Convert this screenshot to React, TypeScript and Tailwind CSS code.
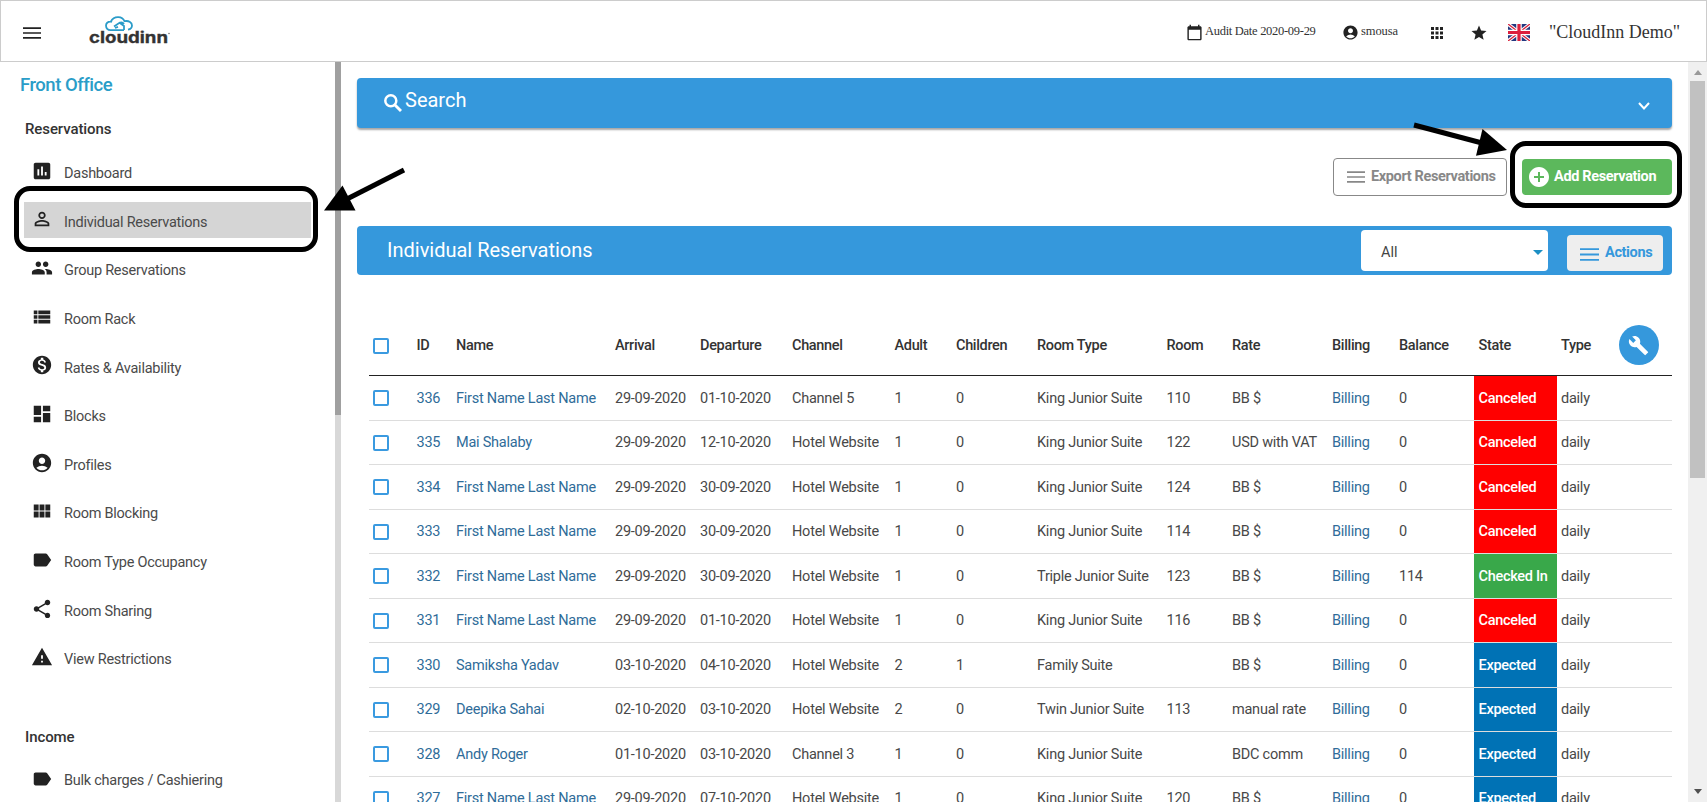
import type { ReactNode } from 'react';
import { clsx } from 'clsx';
import {
  MdAccountCircle,
  MdApps,
  MdAssessment,
  MdCalendarToday,
  MdDashboard,
  MdLabel,
  MdMonetizationOn,
  MdPeople,
  MdPermIdentity,
  MdBuild,
  MdShare,
  MdStar,
  MdViewList,
  MdViewModule,
  MdWarning,
  MdAddCircle,
} from 'react-icons/md';

const menu = [
  { icon: MdAssessment, label: 'Dashboard' },
  { icon: MdPermIdentity, label: 'Individual Reservations', active: true },
  { icon: MdPeople, label: 'Group Reservations' },
  { icon: MdViewList, label: 'Room Rack' },
  { icon: MdMonetizationOn, label: 'Rates & Availability' },
  { icon: MdDashboard, label: 'Blocks' },
  { icon: MdAccountCircle, label: 'Profiles' },
  { icon: MdViewModule, label: 'Room Blocking' },
  { icon: MdLabel, label: 'Room Type Occupancy' },
  { icon: MdShare, label: 'Room Sharing' },
  { icon: MdWarning, label: 'View Restrictions' },
];

const rows = [
  { id: 336, name: 'First Name Last Name', arrival: '29-09-2020', departure: '01-10-2020', channel: 'Channel 5', adult: 1, children: 0, roomType: 'King Junior Suite', room: '110', rate: 'BB $', balance: 0, state: 'Canceled' },
  { id: 335, name: 'Mai Shalaby', arrival: '29-09-2020', departure: '12-10-2020', channel: 'Hotel Website', adult: 1, children: 0, roomType: 'King Junior Suite', room: '122', rate: 'USD with VAT', balance: 0, state: 'Canceled' },
  { id: 334, name: 'First Name Last Name', arrival: '29-09-2020', departure: '30-09-2020', channel: 'Hotel Website', adult: 1, children: 0, roomType: 'King Junior Suite', room: '124', rate: 'BB $', balance: 0, state: 'Canceled' },
  { id: 333, name: 'First Name Last Name', arrival: '29-09-2020', departure: '30-09-2020', channel: 'Hotel Website', adult: 1, children: 0, roomType: 'King Junior Suite', room: '114', rate: 'BB $', balance: 0, state: 'Canceled' },
  { id: 332, name: 'First Name Last Name', arrival: '29-09-2020', departure: '30-09-2020', channel: 'Hotel Website', adult: 1, children: 0, roomType: 'Triple Junior Suite', room: '123', rate: 'BB $', balance: 114, state: 'Checked In' },
  { id: 331, name: 'First Name Last Name', arrival: '29-09-2020', departure: '01-10-2020', channel: 'Hotel Website', adult: 1, children: 0, roomType: 'King Junior Suite', room: '116', rate: 'BB $', balance: 0, state: 'Canceled' },
  { id: 330, name: 'Samiksha Yadav', arrival: '03-10-2020', departure: '04-10-2020', channel: 'Hotel Website', adult: 2, children: 1, roomType: 'Family Suite', room: '', rate: 'BB $', balance: 0, state: 'Expected' },
  { id: 329, name: 'Deepika Sahai', arrival: '02-10-2020', departure: '03-10-2020', channel: 'Hotel Website', adult: 2, children: 0, roomType: 'Twin Junior Suite', room: '113', rate: 'manual rate', balance: 0, state: 'Expected' },
  { id: 328, name: 'Andy Roger', arrival: '01-10-2020', departure: '03-10-2020', channel: 'Channel 3', adult: 1, children: 0, roomType: 'King Junior Suite', room: '', rate: 'BDC comm', balance: 0, state: 'Expected' },
  { id: 327, name: 'First Name Last Name', arrival: '29-09-2020', departure: '07-10-2020', channel: 'Hotel Website', adult: 1, children: 0, roomType: 'King Junior Suite', room: '120', rate: 'BB $', balance: 0, state: 'Expected' },
];

const headings = ['ID', 'Name', 'Arrival', 'Departure', 'Channel', 'Adult', 'Children', 'Room Type', 'Room', 'Rate', 'Billing', 'Balance'];

const stateColors: Record<string, string> = {
  Canceled: 'bg-[#ff0000]',
  'Checked In': 'bg-[#39a84a]',
  Expected: 'bg-[#0072b5]',
};

const columns =
  'grid grid-cols-[47.5px_39.5px_159px_85px_92px_102.5px_61.5px_81px_129.5px_65.5px_100px_67px_75px_83px_61.5px_1fr]';

function Lines({ className }: { className?: string }) {
  return (
    <svg viewBox="0 0 18 13" preserveAspectRatio="none" className={className} stroke="currentColor" strokeWidth="1.8">
      <path d="M0 1.2h18M0 6.5h18M0 11.8h18" />
    </svg>
  );
}

function Logo() {
  return (
    <div className="relative h-[30px] w-[84px]">
      <svg viewBox="0 0 28 16" className="absolute top-0 left-[16px] h-[16px] w-[28px]" fill="none" stroke="#2b9cc9" strokeWidth="1.8">
        <path d="M19 14.2H5.5C2.7 14.2 1 12 1 9.6 1 7.3 2.8 5.6 5.4 5.6 5.8 5.6 6.4 5.7 7 6M5.8 5.6C7.5 2.2 10.5 1 13.3 1.1c3 .1 5.2 1.7 6.2 4.1 4.6-.8 7.5 1.3 7.5 4.3 0 2.2-1.5 3.7-4 4.200" />
        <path d="M9 10.500l5.500-3.700 4.500 3.200v4M10 12l3-1.200M14.500 6.800c2-.6 3.500-.2 4.500 1.200" />
      </svg>
      <svg viewBox="0 0 84 30" className="absolute inset-0 h-[30px] w-[84px]">
        <text x="0" y="27" textLength="79" lengthAdjust="spacingAndGlyphs" fontFamily="Inter, sans-serif" fontWeight="700" fontSize="15.5" fill="#333" stroke="#333" strokeWidth="0.3">
          cloudinn
        </text>
        <circle cx="80" cy="17.5" r="0.8" fill="#777" />
      </svg>
    </div>
  );
}

function Flag() {
  return (
    <svg viewBox="0 0 22 17" className="h-[17px] w-[22px]">
      <path fill="#23377f" d="M0 0h22v17H0z" />
      <path stroke="#fff" strokeWidth="3.4" d="M0 0l22 17M22 0L0 17" />
      <path stroke="#d8223b" strokeWidth="1.3" d="M0 0l22 17M22 0L0 17" />
      <path stroke="#fff" strokeWidth="5.5" d="M11 0v17M0 8.5h22" />
      <path stroke="#dc1f3d" strokeWidth="3.2" d="M11 0v17M0 8.5h22" />
    </svg>
  );
}

function Checkbox() {
  return <span className="block h-4 w-4 rounded-[2px] border-2 border-[#3a9ae0] bg-white" />;
}

function Cell({ children, className }: { children?: ReactNode; className?: string }) {
  return <div className={clsx('flex items-center', className)}>{children}</div>;
}

function Header() {
  return (
    <header className="flex h-[62px] shrink-0 items-center border border-[#ccc] bg-white pl-[22px] text-[#222]">
      <Lines className="mt-[3px] h-[12px] w-[18px]" />
      <div className="ml-[48px] -mt-px">
        <Logo />
      </div>
      <div className="ml-auto flex items-center font-['Liberation_Serif',serif] text-[12.5px] text-[#333]">
        <MdCalendarToday className="mr-[2px] mt-[2px] h-[17px] w-[17px] text-[#222]" />
        <span className="w-[137px] tracking-[-0.29px]">Audit Date 2020-09-29</span>
        <MdAccountCircle className="mr-[2px] mt-[3px] h-[17px] w-[17px] text-[#222]" />
        <span className="w-[67px] tracking-[-0.1px]">smousa</span>
        <MdApps className="mr-[24px] mt-1 h-[18px] w-[18px] text-[#222]" />
        <MdStar className="mr-[20px] mt-[3px] h-[18px] w-[18px] text-[#222]" />
        <div className="mr-[19px] mt-[3px]">
          <Flag />
        </div>
        <span className="mt-[2px] w-[157px] text-[18px]">&quot;CloudInn Demo&quot;</span>
      </div>
    </header>
  );
}

function Sidebar() {
  return (
    <aside className="relative flex w-[341px] shrink-0 overflow-visible">
      <div className="flex-1 pl-5">
        <h2 className="mt-[10px] text-[18.5px] leading-[26px] font-medium tracking-[-0.48px] text-[#2a9dc8]">Front Office</h2>
        <h3 className="mt-[21px] ml-[5px] text-[15px] leading-5 font-medium tracking-[-0.1px] text-[#333]">Reservations</h3>
        <ul className="mt-2 mr-6">
          {menu.map((item) => (
            <li key={item.label} className="flex h-[48.65px] items-center">
              <a
                className={clsx(
                  'ml-1 flex h-9 flex-1 items-center text-[14.5px] tracking-[-0.25px] text-[#4a4a4a]',
                  item.active && 'bg-[#d5d5d5]',
                )}
              >
                <item.icon className="-mt-px ml-[7px] mr-[11px] h-[22px] w-[22px] text-[#222]" />
                <span className="pt-[5px]">{item.label}</span>
              </a>
            </li>
          ))}
        </ul>
        <h3 className="mt-[45px] ml-[5px] text-[15px] leading-5 font-medium tracking-[-0.1px] text-[#333]">Income</h3>
        <div className="mt-4 ml-[11px] flex h-9 items-center text-[14.5px] tracking-[-0.25px] text-[#4a4a4a]">
          <MdLabel className="-mt-1 mr-[11px] h-[22px] w-[22px] text-[#222]" />
          Bulk charges / Cashiering
        </div>
      </div>
      <div className="w-[6px] bg-[#d8d8d8]">
        <div className="h-[353px] bg-[#a0a0a0]" />
      </div>

      {/* Callout on the active item */}
      <div className="absolute top-[123.5px] left-[14px] h-[66px] w-[304px] rounded-[16px] border-[5px] border-black" />
      <svg className="absolute top-[100px] left-[320px] h-[60px] w-[90px]" viewBox="320 162 90 60">
        <path d="M404 170L346 199.5" stroke="#000" strokeWidth="5" />
        <path d="M324 210.5L342.5 185.5 355.5 210.5z" />
      </svg>
    </aside>
  );
}

function Toolbar() {
  return (
    <div className="relative mt-[30px] flex h-[38px] items-center justify-end gap-[15px] text-[14.5px] font-bold tracking-[-0.36px]">
      <button className="flex h-[38px] w-[174px] items-center rounded-[4px] border border-[#888] pl-[13px] text-[#888]">
        <Lines className="mr-[6px] h-3 w-[18px] shrink-0" />
        <span className="whitespace-nowrap">Export Reservations</span>
      </button>
      <button className="flex h-9 w-[150px] items-center rounded-[4px] bg-[#5cb85c] pl-[5px] text-white">
        <MdAddCircle className="mr-[3px] h-6 w-6" />
        Add Reservation
      </button>

      {/* Callout on the add button */}
      <div className="absolute -top-[17px] -right-[10px] h-[67px] w-[172px] rounded-[16px] border-[5px] border-black" />
      <svg className="absolute -top-[38px] right-[162px] h-[50px] w-[100px]" viewBox="1410 120 100 50">
        <path d="M1414 125L1482 143" stroke="#000" strokeWidth="5" />
        <path d="M1507 150L1482.5 129 1476 155.7z" />
      </svg>
    </div>
  );
}

function ReservationsTable() {
  return (
    <div className="mt-[41px] ml-3 text-[14.5px] tracking-[-0.24px] text-[#484848]">
      <div className={clsx(columns, 'h-[60px] border-b border-[#222] font-medium tracking-[-0.33px] text-[#333]')}>
        <Cell className="pl-[3.5px]">
          <Checkbox />
        </Cell>
        {headings.map((heading) => (
          <Cell key={heading}>{heading}</Cell>
        ))}
        <Cell className="pl-[4.5px]">State</Cell>
        <Cell className="pl-1">Type</Cell>
        <Cell className="pb-px">
          <button className="flex h-10 w-10 items-center justify-center rounded-full bg-[#3598dc] text-white">
            <MdBuild className="h-[21px] w-[21px]" />
          </button>
        </Cell>
      </div>
      {rows.map((row) => (
        <div key={row.id} className={clsx(columns, 'h-[44.5px] border-b border-[#ddd]')}>
          <Cell className="pt-px pl-[3.5px]">
            <Checkbox />
          </Cell>
          <Cell className="pt-[2px] text-[#2f6c99]">{row.id}</Cell>
          <Cell className="pt-[2px] text-[#2f6c99]">{row.name}</Cell>
          <Cell className="pt-[2px]">{row.arrival}</Cell>
          <Cell className="pt-[2px]">{row.departure}</Cell>
          <Cell className="pt-[2px]">{row.channel}</Cell>
          <Cell className="pt-[2px]">{row.adult}</Cell>
          <Cell className="pt-[2px]">{row.children}</Cell>
          <Cell className="pt-[2px]">{row.roomType}</Cell>
          <Cell className="pt-[2px]">{row.room}</Cell>
          <Cell className="pt-[2px]">{row.rate}</Cell>
          <Cell className="pt-[2px] text-[#2f6c99]">Billing</Cell>
          <Cell className="pt-[2px]">{row.balance}</Cell>
          <Cell className={clsx('pt-[2px] pl-[4.5px] font-medium tracking-[-0.3px] text-white', stateColors[row.state])}>{row.state}</Cell>
          <Cell className="pt-[2px] pl-1">daily</Cell>
          <Cell />
        </div>
      ))}
    </div>
  );
}

function Scrollbar() {
  return (
    <div className="flex w-[19px] shrink-0 flex-col items-center bg-[#f0f0f0] text-[#999]">
      <svg viewBox="0 0 8 5" className="mt-2 h-[5px] w-2" fill="currentColor">
        <path d="M0 5l4-5 4 5z" />
      </svg>
      <div className="mt-[6px] h-[397px] w-[15px] bg-[#c1c1c1]" />
      <svg viewBox="0 0 8 5" className="mt-auto mb-[8px] h-[5px] w-2 text-[#505050]" fill="currentColor">
        <path d="M0 0l4 5 4-5z" />
      </svg>
    </div>
  );
}

export default function App() {
  return (
    <div className="flex h-[802px] w-[1707px] flex-col overflow-hidden bg-white font-[Roboto,sans-serif]">
      <Header />
      <div className="flex min-h-0 flex-1">
        <Sidebar />
        <main className="min-w-0 flex-1 overflow-hidden pt-4 pr-4 pl-4">
          <div className="flex h-[50px] items-center rounded-[4px] bg-[#3598dc] pl-[27px] pr-[22px] text-white shadow-[0_2px_2px_rgba(0,0,0,0.35)]">
            <svg viewBox="0 0 18 18" className="mr-[3px] h-[18px] w-[18px]" fill="none" stroke="currentColor" strokeWidth="2.5">
              <circle cx="6.800" cy="6.800" r="5.500" />
              <path d="M11 11l6 6" strokeWidth="2.9" />
            </svg>
            <span className="-mt-[7px] text-[20px]">Search</span>
            <svg viewBox="0 0 12 8" className="mt-[5px] ml-auto h-2 w-3" fill="none" stroke="currentColor" strokeWidth="2">
              <path d="M1 1l5 5.500L11 1" />
            </svg>
          </div>
          <Toolbar />
          <div className="mt-[30px] flex h-[49px] items-center rounded-[4px] bg-[#3598dc] pr-[9px] pl-[30px]">
            <h1 className="-mt-px text-[20px] text-white">Individual Reservations</h1>
            <div className="ml-auto flex h-[41px] w-[187px] items-center justify-between rounded-[4px] bg-white pr-[5px] pl-5 text-[14.5px] text-[#444]">
              <span className="pt-1">All</span>
              <svg viewBox="0 0 10 5" className="mt-[3px] h-[5px] w-[10px]" fill="#1c8fc4">
                <path d="M0 0l5 5 5-5z" />
              </svg>
            </div>
            <button className="mt-[4px] ml-[19px] flex h-9 w-[96px] items-center rounded-[4px] bg-[#eee] pl-[13px] text-[14.5px] font-bold tracking-[-0.36px] text-[#3598dc]">
              <Lines className="mr-[6px] mt-[3px] h-[13px] w-[19px]" />
              Actions
            </button>
          </div>
          <ReservationsTable />
        </main>
        <Scrollbar />
      </div>
    </div>
  );
}
